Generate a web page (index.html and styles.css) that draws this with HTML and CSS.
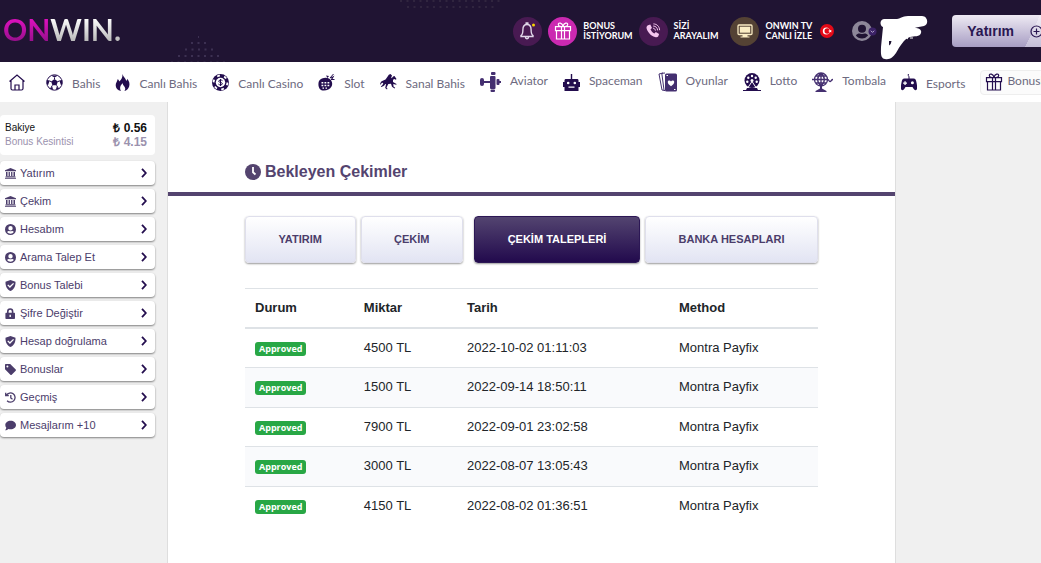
FILE: index.html
```html
<!DOCTYPE html>
<html lang="tr">
<head>
<meta charset="utf-8">
<meta name="viewport" content="width=device-width, initial-scale=1">
<title>Bekleyen Çekimler</title>
<link rel="stylesheet" href="styles.css">
</head>
<body>
<svg class="defs" aria-hidden="true">
  <symbol id="bank" viewBox="0 0 11 11"><path d="M5.5 0 11 2.3V3.3H0V2.3ZM1 4h1.5v4H1zM3.6 4h1.3v4H3.6zM6.1 4h1.3v4H6.1zM8.5 4H10v4H8.5zM.6 8.3h9.8v1H.6zM0 9.7h11v1.1H0z"/></symbol>
  <symbol id="person" viewBox="0 0 20 20"><path fill-rule="evenodd" d="M10 0a10 10 0 1 0 0 20 10 10 0 0 0 0-20Zm0 3.7a4 4 0 1 1 0 8 4 4 0 0 1 0-8Zm0 13.8c-2.600 0-4.800-1.100-6.100-2.900.9-1.500 2.300-2 3.400-2 .7.300 1.700.5 2.700.5s2-.2 2.700-.5c1.100 0 2.500.5 3.400 2A7.600 7.600 0 0 1 10 17.500Z"/></symbol>
  <symbol id="shield" viewBox="0 0 11 11"><path fill-rule="evenodd" d="M5.500 0 10.500 1.700C10.700 6.500 8.600 9.700 5.500 11 2.400 9.700.3 6.500.5 1.700ZM2.300 5.300 4.900 7.900 9 3.800 8.100 2.900 4.900 6 3.200 4.400Z"/></symbol>
  <symbol id="lock" viewBox="0 0 11 11"><path fill-rule="evenodd" d="M2 4.800V3.400a3.200 3.200 0 0 1 6.400 0v1.400H9c.6 0 1 .4 1 1V10c0 .6-.4 1-1 1H1.400c-.6 0-1-.4-1-1V5.800c0-.6.4-1 1-1Zm1.600 0h3.200V3.400a1.600 1.600 0 0 0-3.200 0ZM4.500 6.700v2.200h1.400V6.700Z"/></symbol>
  <symbol id="tag" viewBox="0 0 11 11"><path fill-rule="evenodd" d="M0 1c0-.6.400-1 1-1h4.200l5.500 5.400c.4.400.4.900 0 1.300l-4 4c-.4.400-.9.400-1.300 0L0 5.200ZM2.400 1.400a1 1 0 1 0 0 2 1 1 0 0 0 0-2Z"/></symbol>
  <symbol id="history" viewBox="0 0 11 11"><path d="M1.500 3.200A4.600 4.600 0 1 1 2.100 8.700M.7.700V3.700H3.800M5.800 2.900V5.900L7.500 7.200" fill="none" stroke="currentColor" stroke-width="1.300"/></symbol>
  <symbol id="chat" viewBox="0 0 11 11"><path d="M5.700.7C8.700.7 11 2.600 11 5S8.700 9.300 5.700 9.300c-.8 0-1.600-.1-2.300-.4C2.600 9.500 1.400 10.200.1 10.200.8 9.400 1.200 8.500 1.300 7.700A4 4 0 0 1 .3 5C.3 2.600 2.700.7 5.700.7Z"/></symbol>
  <symbol id="chevron" viewBox="0 0 6 10"><path d="M1 .8 4.800 5 1 9.200" fill="none" stroke="#230d4e" stroke-width="1.800"/></symbol>
  <symbol id="gift" viewBox="0 0 18 18"><path d="M1.500 4.700h15v4h-15zM2.500 8.700h13v8.300h-13zM7.500 4.700V17M10.500 4.700V17M9 4.500C7.500 4.500 4.300 4.200 4.300 2.400 4.300.2 8.300.6 9 4.500 9.700.6 13.700.2 13.700 2.400c0 1.800-3.200 2.100-4.700 2.100Z" fill="none" stroke="currentColor" stroke-width="1.200"/></symbol>
</svg>

<header class="topbar">
  <svg class="dots dots-low" width="56" height="30" viewBox="0 0 56 30" aria-hidden="true"><path d="M27 3h1M20 9h15M14 15.500h28M7 22h42M0 28.500h56" stroke="#3c3052" stroke-width="2" stroke-dasharray="2 4.500"/></svg>
  <svg class="dots dots-high" width="104" height="12" viewBox="0 0 104 12" aria-hidden="true"><path d="M0 1h104M7 7h90" stroke="#30253f" stroke-width="2" stroke-dasharray="2 4.500"/></svg>
  <a class="logo" href="#"><span class="logo-on">ON</span><span class="logo-win">WIN.</span></a>
  <div class="actions">
    <button class="round plum" aria-label="Bildirimler"><svg width="17" height="20" viewBox="0 0 17 20"><path d="M2 14.500c1.600-1 1.900-2.700 1.900-5.800C3.900 5.500 5.600 3.500 8 3.500s4.100 2 4.100 5.200c0 3.100.3 4.800 1.900 5.800v1H2ZM7.200 3.500V2h1.600v1.500M6.400 15.800c0 2.500 3.200 2.500 3.200 0" fill="none" stroke="#e0d6e8" stroke-width="1.400"/><circle cx="14.500" cy="4" r="1.500" fill="#f5d400"/></svg></button>
    <a class="action" href="#"><span class="round pink"><svg width="18" height="18"><use href="#gift"/></svg></span><span class="label">BONUS<br>İSTİYORUM</span></a>
    <a class="action" href="#"><span class="round plum"><svg width="16" height="16" viewBox="0 0 16 16"><path d="M3 2.200 5.300 1.500 7 5 5.500 6.300c.7 1.800 2 3.200 3.900 4.200l1.400-1.500 3.300 2-.8 2.300c-.5 1-1.800 1.200-3.300.8C6 13 2.700 9.300 1.600 5.500 1.200 4 2 2.700 3 2.200Z" fill="#f5c6ef"/><path d="M8 5.200c1.300.1 2.300 1 2.400 2.400M8.200 3c2.600.1 4.300 1.900 4.400 4.400M8.400.9c3.600.1 6.100 2.700 6.200 6.300" fill="none" stroke="#f5c6ef" stroke-width="1"/></svg></span><span class="label">SİZİ<br>ARAYALIM</span></a>
    <a class="action tv" href="#"><span class="round brown"><svg width="16" height="14" viewBox="0 0 16 14"><rect x="1" y="1" width="14" height="9.500" rx="1" fill="none" stroke="#fbedc4" stroke-width="1.300"/><path d="M2.800 2.700h10.400v6H2.800z" fill="#fbedc4"/><path d="M5.500 11h5v1.500h-5zM3.500 12.500h9v1h-9z" fill="#fbedc4"/></svg></span><span class="label">ONWIN TV<br>CANLI İZLE</span><svg class="flag" width="14" height="14" viewBox="0 0 14 14" aria-hidden="true"><circle cx="7" cy="7" r="7" fill="#e30a17"/><circle cx="6.300" cy="7" r="3.500" fill="#fff"/><circle cx="7.300" cy="7" r="2.800" fill="#e30a17"/><path d="m8 7 1.400-.5.100-1.400.8 1.100 1.400-.3-.7 1.200.7 1.200-1.400-.3-.8 1.100-.1-1.500z" fill="#fff"/></svg></a>
    <button class="account" aria-label="Hesap"><svg width="25" height="20" viewBox="0 0 25 20"><use href="#person" width="20" height="20"/><circle cx="20.500" cy="10.500" r="4" fill="#3b2166"/><path d="m18.800 9.700 1.700 1.700 1.700-1.700" fill="none" stroke="#b9acd0" stroke-width="1"/></svg></button>
    <svg class="scribble" width="48" height="46" viewBox="0 0 48 46" aria-hidden="true"><path d="M4 4H17C20 4 22 1 28 1H42C48 1 49 10 44 11 41 12 36 12 35 13 39 13 42 15 41 18 40 22 34 21 30 22 24 24 20 31 16 38 13 42 10 45 5 44 0 43 1 37 1 32L3 12C0 11-1 5 4 4Z" fill="#fff"/><path d="M9 26h2.500l-.8 3L9 30.500z" fill="#1f1433"/><path d="M26 22.500 28 24M30 23h3" stroke="#fff" stroke-width="1"/></svg>
    <button class="deposit">Yatırım <svg width="13" height="13" viewBox="0 0 13 13" aria-hidden="true"><path d="M6.500 1a5.500 5.500 0 1 0 0 11 5.500 5.500 0 0 0 0-11ZM6.500 3.500v6M3.500 6.500h6" fill="none" stroke="currentColor" stroke-width="1.200"/></svg></button>
  </div>
</header>

<nav class="games" aria-label="Oyunlar">
  <a class="home" href="#" aria-label="Ana sayfa"><svg width="16" height="17" viewBox="0 0 16 17"><path d="M.5 7.500 8 1l7.500 6.500M2 6.500V14.500c0 1 .5 1.500 1.500 1.500h9c1 0 1.500-.5 1.500-1.500v-8M6 16v-5h4v5" fill="none" stroke="currentColor" stroke-width="1.200"/></svg></a>
  <a href="#"><svg width="17" height="17" viewBox="0 0 17 17"><circle cx="8.500" cy="8.500" r="7.700" fill="none" stroke="currentColor"/><path d="m8.500 5 3.300 2.500-1.200 3.800H6.400L5.200 7.500ZM5 1.600h7L8.500 3.600ZM.7 6l3 .5L2 11.200.7 10ZM16.300 6l-3 .5L15 11.200l1.300-1.200ZM3.300 14.300l3-1.600.9 3.200ZM13.700 14.300l-3-1.600-.9 3.200Z"/><path d="M8.500 3.500V5M3.500 7l2 .7M13.500 7l-2 .7M6.400 11.300l-1 1.700M10.600 11.300l1 1.700" stroke="currentColor"/></svg><span>Bahis</span></a>
  <a href="#"><svg width="15" height="17" viewBox="0 0 15 17"><path d="M7.500 0c.7 3 3.200 4.200 3.700 6.800.7-.3 1-1 .9-2C14.200 7 15 9.500 14.200 12.200 13.500 14.800 11.500 16.500 9.400 17c1.300-1.700 1-3.300-.2-4.800-.9-1-1.400-1.600-1.300-3C6 10.200 4 13.500 6 17 2.500 16.300.7 14 .7 11.200.7 8.700 2.300 7.500 2.600 5.200c1 .4 1.500 1.200 1.600 2.300C6.500 5.700 7.700 3 7.500 0Z"/></svg><span>Canlı Bahis</span></a>
  <a href="#"><svg width="17" height="17" viewBox="0 0 17 17"><circle cx="8.500" cy="8.500" r="8.500"/><circle cx="8.500" cy="8.500" r="6.900" fill="none" stroke="#fff" stroke-width="1.800" stroke-dasharray="2.800 4.425"/><circle cx="8.500" cy="8.500" r="4.700" fill="#fff"/><path d="M10.500 6.700C9.500 5.600 6.600 5.900 6.700 7.300c.1 1.500 3.700.8 3.700 2.400 0 1.500-3 1.600-4 .4M8.500 5v7" fill="none" stroke="currentColor"/></svg><span>Canlı Casino</span></a>
  <a href="#"><svg width="17" height="17" viewBox="0 0 17 17"><path d="M1 7C3 4 8 3 11 4.500c3 1.700 4 5 2.500 8-1.500 3-5.500 4.500-9 4S-.5 11 1 7ZM9.500 4 8 1.500l3 .5ZM12 4l4.500-2.500L14.500 5ZM11 3.500 13.500.5M14 7l3-.5"/><path d="m12 4 3.500-4M13 5.500h3.500" stroke="currentColor"/><path d="M3.500 8h1.800v1.500H3.500zM6.500 8h1.800v1.500H6.500zM9.500 8h1.800v1.500H9.500zM3.500 10.700h1.800v1.500H3.500zM6.500 10.700h1.800v1.500H6.500zM9.500 10.700h1.800v1.500H9.500zM4.500 13.400h1.500v1.400H4.500zM7.500 13.400H9v1.400H7.500z" fill="#fff"/></svg><span>Slot</span></a>
  <a href="#"><svg width="17" height="17" viewBox="0 0 17 17"><path d="m16.500 5-2-3-1 .2-1.500 1.500-1 .5L12 1.500 10.500 0 8.800.7 7.300 3 5.500 5.500 2.800 6.800C1 7.300.2 8.800 0 11l2-2.200 1.300.2-.8 2-1.700 1.500.7.600 2.500-1.300 1.300-1.800.7.300-.8 3.700 1.800 1.500.5-.8-1-1.200L8.300 10l2.700-.2 1 3 2.500 1.700.7-.7-1.700-1.300-.2-2.500 3 .8.200-.8L13 8V5.700l1.500-.8 1.300.9Z"/></svg><span>Sanal Bahis</span></a>
  <a class="raised" href="#"><svg class="soft" width="21" height="20" viewBox="0 0 21 20"><rect x="0" y="6" width="4" height="8" rx="2"/><path d="M3 9h7v2H3zM18 9h3v2h-3z"/><rect x="10" y="4" width="5.500" height="13" rx="1"/><rect x="11" y="0" width="4.500" height="3" rx="1"/><rect x="10.500" y="17.500" width="4.500" height="2.500" rx="1"/><rect x="16.500" y="7" width="3" height="6" rx="1"/></svg><span>Aviator</span></a>
  <a class="raised" href="#"><svg width="17" height="17" viewBox="0 0 17 17"><path fill-rule="evenodd" d="M7.800 0h1.400v5H14c1 0 1.500.5 1.500 1.500V8H17v5h-1.500v4h-14v-4H0V8h1.500V6.500C1.500 5.500 2 5 3 5h4.800ZM5.200 7.700a1.300 1.300 0 1 0 0 2.600 1.300 1.300 0 0 0 0-2.600Zm6.600 0a1.300 1.300 0 1 0 0 2.600 1.300 1.300 0 0 0 0-2.600ZM5.500 12.500v1.300h6v-1.300Z"/></svg><span>Spaceman</span></a>
  <a class="raised" href="#"><svg class="soft" width="19" height="20" viewBox="0 0 19 20"><path d="m5 1-4 1 3 16 3 .6M7 1 3.800 1.300 6 18" fill="none" stroke="currentColor"/><rect x="7" y="1.500" width="12" height="18" rx="1.500"/><path d="M13 14.300c-2.300-1.600-3.400-3-3.200-4.500.2-1.700 2.500-1.900 3.200-.3.700-1.600 3-1.400 3.200.3.200 1.500-.9 2.900-3.200 4.500Z" fill="#fff"/><path d="M8.500 3.500H10M16 17.500h1.500" stroke="#fff"/></svg><span>Oyunlar</span></a>
  <a class="raised" href="#"><svg width="18" height="18" viewBox="0 0 18 18"><circle cx="9" cy="7.500" r="7.500"/><path d="M9 8.500 5 14.500M9 8.500l4 6" stroke="#fff" fill="none"/><g fill="#fff"><circle cx="9" cy="3" r="1.200"/><circle cx="5.300" cy="4.800" r="1.200"/><circle cx="12.700" cy="4.800" r="1.200"/><circle cx="4.300" cy="8.800" r="1.200"/><circle cx="13.700" cy="8.800" r="1.200"/><circle cx="9" cy="7.500" r="1.500"/></g><path d="M4 15h10l1 2h3v1H0v-1h3Z"/></svg><span>Lotto</span></a>
  <a class="raised" href="#"><svg class="soft" width="21" height="20" viewBox="0 0 21 20"><path d="M9 1a6.500 6.500 0 1 0 0 13A6.500 6.500 0 0 0 9 1ZM9 1v13M2.500 7.500h13M3.500 4h11M3.500 11h11M9 1C4.500 5 4.500 10 9 14c4.500-4 4.500-9 0-13M0 7.500h3M15.500 7.500c2 0 1 2 2.500 2s1-2 3-2" fill="none" stroke="currentColor" stroke-width="1.300"/><path d="M8 14h2v2.500l4.500 2.500v1H3.500v-1L8 16.500Z"/></svg><span>Tombala</span></a>
  <a href="#"><svg width="16" height="17" viewBox="0 0 16 17"><path fill-rule="evenodd" d="M3.500 4.500h9c2 0 2.500 1.500 3 4 .6 2.800 1 6 .1 7.200-1.300 1.200-2.900-.2-4.100-2.700h-7c-1.200 2.500-2.800 3.900-4.100 2.700C-.5 14.500-.1 11.300.5 8.500c.5-2.500 1-4 3-4Zm-.1 2.700v1.300H2.100v1.300h1.300v1.300h1.300V9.800H6V8.500H4.700V7.200Zm8 0a1.500 1.500 0 1 0 0 3 1.500 1.500 0 0 0 0-3Z"/><path d="M8 5V2.800L7.300 1.500V0" fill="none" stroke="currentColor"/></svg><span>Esports</span></a>
  <a class="raised boxed" href="#"><svg width="18" height="18"><use href="#gift"/></svg><span>Bonuslar</span></a>
</nav>

<div class="page">
  <aside class="sidebar">
    <dl class="balance">
      <div><dt>Bakiye</dt><dd>₺ 0.56</dd></div>
      <div class="muted"><dt>Bonus Kesintisi</dt><dd>₺ 4.15</dd></div>
    </dl>
    <nav class="menu" aria-label="Hesap menüsü">
      <a href="#"><svg class="mi"><use href="#bank"/></svg><span>Yatırım</span><svg class="arrow"><use href="#chevron"/></svg></a>
      <a href="#"><svg class="mi"><use href="#bank"/></svg><span>Çekim</span><svg class="arrow"><use href="#chevron"/></svg></a>
      <a href="#"><svg class="mi"><use href="#person"/></svg><span>Hesabım</span><svg class="arrow"><use href="#chevron"/></svg></a>
      <a href="#"><svg class="mi"><use href="#person"/></svg><span>Arama Talep Et</span><svg class="arrow"><use href="#chevron"/></svg></a>
      <a href="#"><svg class="mi"><use href="#shield"/></svg><span>Bonus Talebi</span><svg class="arrow"><use href="#chevron"/></svg></a>
      <a href="#"><svg class="mi"><use href="#lock"/></svg><span>Şifre Değiştir</span><svg class="arrow"><use href="#chevron"/></svg></a>
      <a href="#"><svg class="mi"><use href="#shield"/></svg><span>Hesap doğrulama</span><svg class="arrow"><use href="#chevron"/></svg></a>
      <a href="#"><svg class="mi"><use href="#tag"/></svg><span>Bonuslar</span><svg class="arrow"><use href="#chevron"/></svg></a>
      <a href="#"><svg class="mi"><use href="#history"/></svg><span>Geçmiş</span><svg class="arrow"><use href="#chevron"/></svg></a>
      <a href="#"><svg class="mi"><use href="#chat"/></svg><span>Mesajlarım +10</span><svg class="arrow"><use href="#chevron"/></svg></a>
    </nav>
  </aside>

  <main class="content">
    <h1 class="title"><svg width="16" height="16" viewBox="0 0 16 16" aria-hidden="true"><circle cx="8" cy="8" r="8"/><path d="M8 3v5.300l2.500 2.200" fill="none" stroke="#fff" stroke-width="1.800"/></svg>Bekleyen Çekimler</h1>
    <div class="body">
      <div class="tabs">
        <button>YATIRIM</button>
        <button>ÇEKİM</button>
        <button class="active">ÇEKİM TALEPLERİ</button>
        <button>BANKA HESAPLARI</button>
      </div>
      <table class="requests">
        <thead><tr><th class="c-status">Durum</th><th class="c-amount">Miktar</th><th class="c-date">Tarih</th><th>Method</th></tr></thead>
        <tbody>
          <tr><td><span class="badge">Approved</span></td><td>4500 TL</td><td>2022-10-02 01:11:03</td><td>Montra Payfix</td></tr>
          <tr><td><span class="badge">Approved</span></td><td>1500 TL</td><td>2022-09-14 18:50:11</td><td>Montra Payfix</td></tr>
          <tr><td><span class="badge">Approved</span></td><td>7900 TL</td><td>2022-09-01 23:02:58</td><td>Montra Payfix</td></tr>
          <tr><td><span class="badge">Approved</span></td><td>3000 TL</td><td>2022-08-07 13:05:43</td><td>Montra Payfix</td></tr>
          <tr><td><span class="badge">Approved</span></td><td>4150 TL</td><td>2022-08-02 01:36:51</td><td>Montra Payfix</td></tr>
        </tbody>
      </table>
    </div>
  </main>
</div>
</body>
</html>
```
FILE: styles.css
```css
* { box-sizing: border-box; }

body {
  margin: 0;
  min-height: 100vh;
  display: flex;
  flex-direction: column;
  overflow-x: hidden;
  background: #fff;
  color: #212529;
  font-family: "Liberation Sans", Arial, sans-serif;
}

a { color: inherit; text-decoration: none; }
button { font: inherit; border: 0; padding: 0; background: none; cursor: pointer; }
svg { display: block; flex: none; fill: currentColor; }
.defs { position: absolute; width: 0; height: 0; }

/* Top bar */
.topbar {
  position: relative;
  display: flex;
  align-items: center;
  justify-content: space-between;
  height: 62px;
  overflow: hidden;
  background: #201433;
  color: #fff;
}
.dots { position: absolute; }
.dots-low { left: 171px; bottom: -2px; }
.dots-high { left: 400px; top: 0; }

.logo {
  position: relative;
  margin-left: 3px;
  padding-bottom: 4px;
  font: 700 30px/36px Lato, sans-serif;
}
.logo span { background-clip: text; -webkit-background-clip: text; color: transparent; }
.logo-on { background-image: linear-gradient(#e010c0 20%, #9c1090 80%); }
.logo-win { background-image: linear-gradient(#fff 20%, #b8b8b8 85%); }

.actions {
  display: flex;
  align-items: center;
  flex: none;
  margin-right: -12px;
}
.round {
  display: flex;
  align-items: center;
  justify-content: center;
  width: 29px;
  height: 29px;
  border-radius: 50%;
}
.plum { background: #481a52; }
.pink { background: #cb29b1; color: #fff; }
.brown { background: #544234; }
.action {
  display: flex;
  align-items: center;
  gap: 6px;
  margin-left: 6px;
}
.tv { margin-left: 12px; }
.label { font: 700 9px/10px Lato, sans-serif; white-space: nowrap; }
.flag { margin-left: 2px; }
.account { margin: 0 3px 0 18px; color: #8d8799; }
.scribble { margin-top: 14px; }
.deposit {
  display: flex;
  align-items: center;
  gap: 16px;
  height: 32px;
  margin-left: 24px;
  padding: 0 10px 0 15px;
  border-radius: 4px;
  background: linear-gradient(115deg, transparent 76%, #ffffff55 76%), linear-gradient(#eeeaf3, #a79dc3);
  color: #2a1752;
  font-size: 14px;
  font-weight: 700;
}

/* Game categories */
.games {
  display: flex;
  align-items: center;
  gap: 15px;
  height: 40px;
  padding-left: 9px;
  overflow: hidden;
  color: #230d4e;
}
.games a {
  display: flex;
  align-items: center;
  flex: none;
  gap: 9px;
  color: #6d6a80;
  font: 400 12px/16px Lato, sans-serif;
}
.games a span { padding-top: 3px; }
.games a svg { color: #230d4e; }
.games a .soft { color: #442f70; }
.games .home { margin-right: 6px; }
.games .raised span { padding: 0 0 3px; }
.games .boxed {
  gap: 4px;
  padding: 2px 4px;
  border: 1px solid #eee;
  border-radius: 4px;
  background: #fbfbfb;
}

/* Page body */
.page {
  display: grid;
  grid-template-columns: 168px 1fr 145px;
  flex: 1;
  background: #f0f0f0;
}
.sidebar {
  padding: 13px 12px 24px 0;
  border-right: 1px solid #dedede;
  font-size: 11px;
}
.balance {
  display: flex;
  flex-direction: column;
  margin: 0 0 6px;
  padding: 6px 8px 6px 5px;
  border-radius: 4px;
  background: #fff;
  color: #111;
}
.balance div {
  display: flex;
  justify-content: space-between;
  align-items: center;
  line-height: 14px;
}
.balance dt { font-size: 10px; }
.balance dd { margin: 0; font-size: 12px; font-weight: 700; }
.balance .muted { color: #9b92ae; }

.menu { display: flex; flex-direction: column; gap: 4px; }
.menu a {
  display: flex;
  align-items: center;
  gap: 4px;
  height: 24px;
  padding: 0 8px 0 5px;
  border-radius: 4px;
  background: #fff;
  box-shadow: 0 1px 2px #0007;
  color: #4b3d6b;
}
.mi { width: 11px; height: 11px; }
.arrow { width: 6px; height: 10px; margin-left: auto; }

.content {
  background: #fff;
  border-right: 1px solid #dedede;
}
.title {
  display: flex;
  align-items: center;
  gap: 4px;
  margin: 0;
  padding: 60px 77px 10px;
  border-bottom: 4px solid #54446f;
  color: #54446f;
  font-size: 16px;
  line-height: 20px;
}
.body { padding: 20px 77px 24px; }

.tabs { display: flex; gap: 5px; }
.tabs button {
  flex: 1 1 auto;
  height: 47px;
  padding: 0 32px 2px;
  border: 1px solid #dfdfec;
  border-radius: 4px;
  background: linear-gradient(#fff, #e2e4f3);
  box-shadow: 0 1px 2px #0006;
  color: #4b3d6b;
  font-size: 11px;
  font-weight: 700;
  white-space: nowrap;
}
.tabs .active {
  margin-left: 6px;
  border-color: #2c1755;
  background: linear-gradient(#534470, #220a4d);
  color: #fff;
}

.requests {
  width: 100%;
  margin-top: 25px;
  border-collapse: collapse;
  table-layout: fixed;
  font-size: 13px;
  line-height: 20px;
  text-align: left;
}
.requests th { padding: 9px 10px; border-top: 1px solid #dee2e6; border-bottom: 2px solid #dee2e6; }
.requests td { height: 39px; padding: 0 10px; border-top: 1px solid #dee2e6; }
.requests tbody tr:nth-child(even) { background: #f9fafc; }
.requests tbody tr:nth-child(even) td { height: 40px; }
.c-status { width: 19%; }
.c-amount { width: 18%; }
.c-date { width: 37%; }
.badge {
  display: inline-block;
  padding: 0 4px;
  border-radius: 3px;
  background: #28a745;
  color: #fff;
  font: 700 9px/14px "Open Sans", sans-serif;
}
```
